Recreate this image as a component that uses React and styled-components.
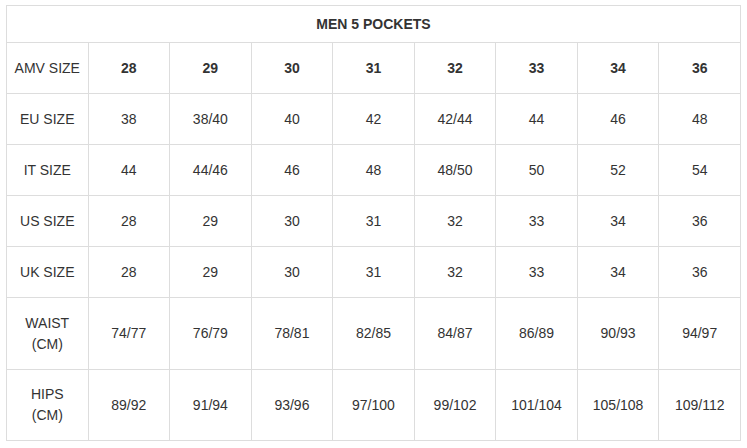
import React from "react";
import styled, { createGlobalStyle } from "styled-components";

// ========== global ==========
const GlobalStyle = createGlobalStyle`
  body {
    margin: 0;
    background: #fff;
    font-family: "Liberation Sans", Arial, sans-serif;
  }
`;

// ========== css: styled components ==========
const Page = styled.div`
  padding: 5px 0 0 6px;
`;

const Table = styled.table`
  width: 735px;
  border-collapse: collapse;
  table-layout: fixed;
  color: #333;
  font-size: 14px;
  line-height: 21px;
`;

const Row = styled.tr`
  height: ${(p) => p.$h}px;
`;

const Title = styled.th`
  border: 1px solid #ddd;
  font-weight: bold;
  text-align: center;
  padding: 0;
`;

const Cell = styled.td`
  border: 1px solid #ddd;
  text-align: center;
  vertical-align: middle;
  padding: 0 4px;
  font-weight: ${(p) => (p.$bold ? "bold" : "normal")};
`;

// ========== data ==========
const rows = [
  { label: "AMV SIZE", values: ["28", "29", "30", "31", "32", "33", "34", "36"], bold: true, h: 51 },
  { label: "EU SIZE", values: ["38", "38/40", "40", "42", "42/44", "44", "46", "48"], h: 51 },
  { label: "IT SIZE", values: ["44", "44/46", "46", "48", "48/50", "50", "52", "54"], h: 51 },
  { label: "US SIZE", values: ["28", "29", "30", "31", "32", "33", "34", "36"], h: 51 },
  { label: "UK SIZE", values: ["28", "29", "30", "31", "32", "33", "34", "36"], h: 51 },
  { label: ["WAIST", "(CM)"], values: ["74/77", "76/79", "78/81", "82/85", "84/87", "86/89", "90/93", "94/97"], h: 72 },
  { label: ["HIPS", "(CM)"], values: ["89/92", "91/94", "93/96", "97/100", "99/102", "101/104", "105/108", "109/112"], h: 71 },
];

// ========== component ==========
const App = () => {
  return (
    <Page>
      <GlobalStyle />
      <Table>
        <tbody>
          <Row $h={37}>
            <Title colSpan={9}>MEN 5 POCKETS</Title>
          </Row>
          {rows.map((r, i) => (
            <Row key={i} $h={r.h}>
              <Cell>
                {Array.isArray(r.label)
                  ? r.label.map((l, j) => (
                      <React.Fragment key={j}>
                        {j > 0 && <br />}
                        {l}
                      </React.Fragment>
                    ))
                  : r.label}
              </Cell>
              {r.values.map((v, j) => (
                <Cell key={j} $bold={r.bold}>
                  {v}
                </Cell>
              ))}
            </Row>
          ))}
        </tbody>
      </Table>
    </Page>
  );
};

export default App;
